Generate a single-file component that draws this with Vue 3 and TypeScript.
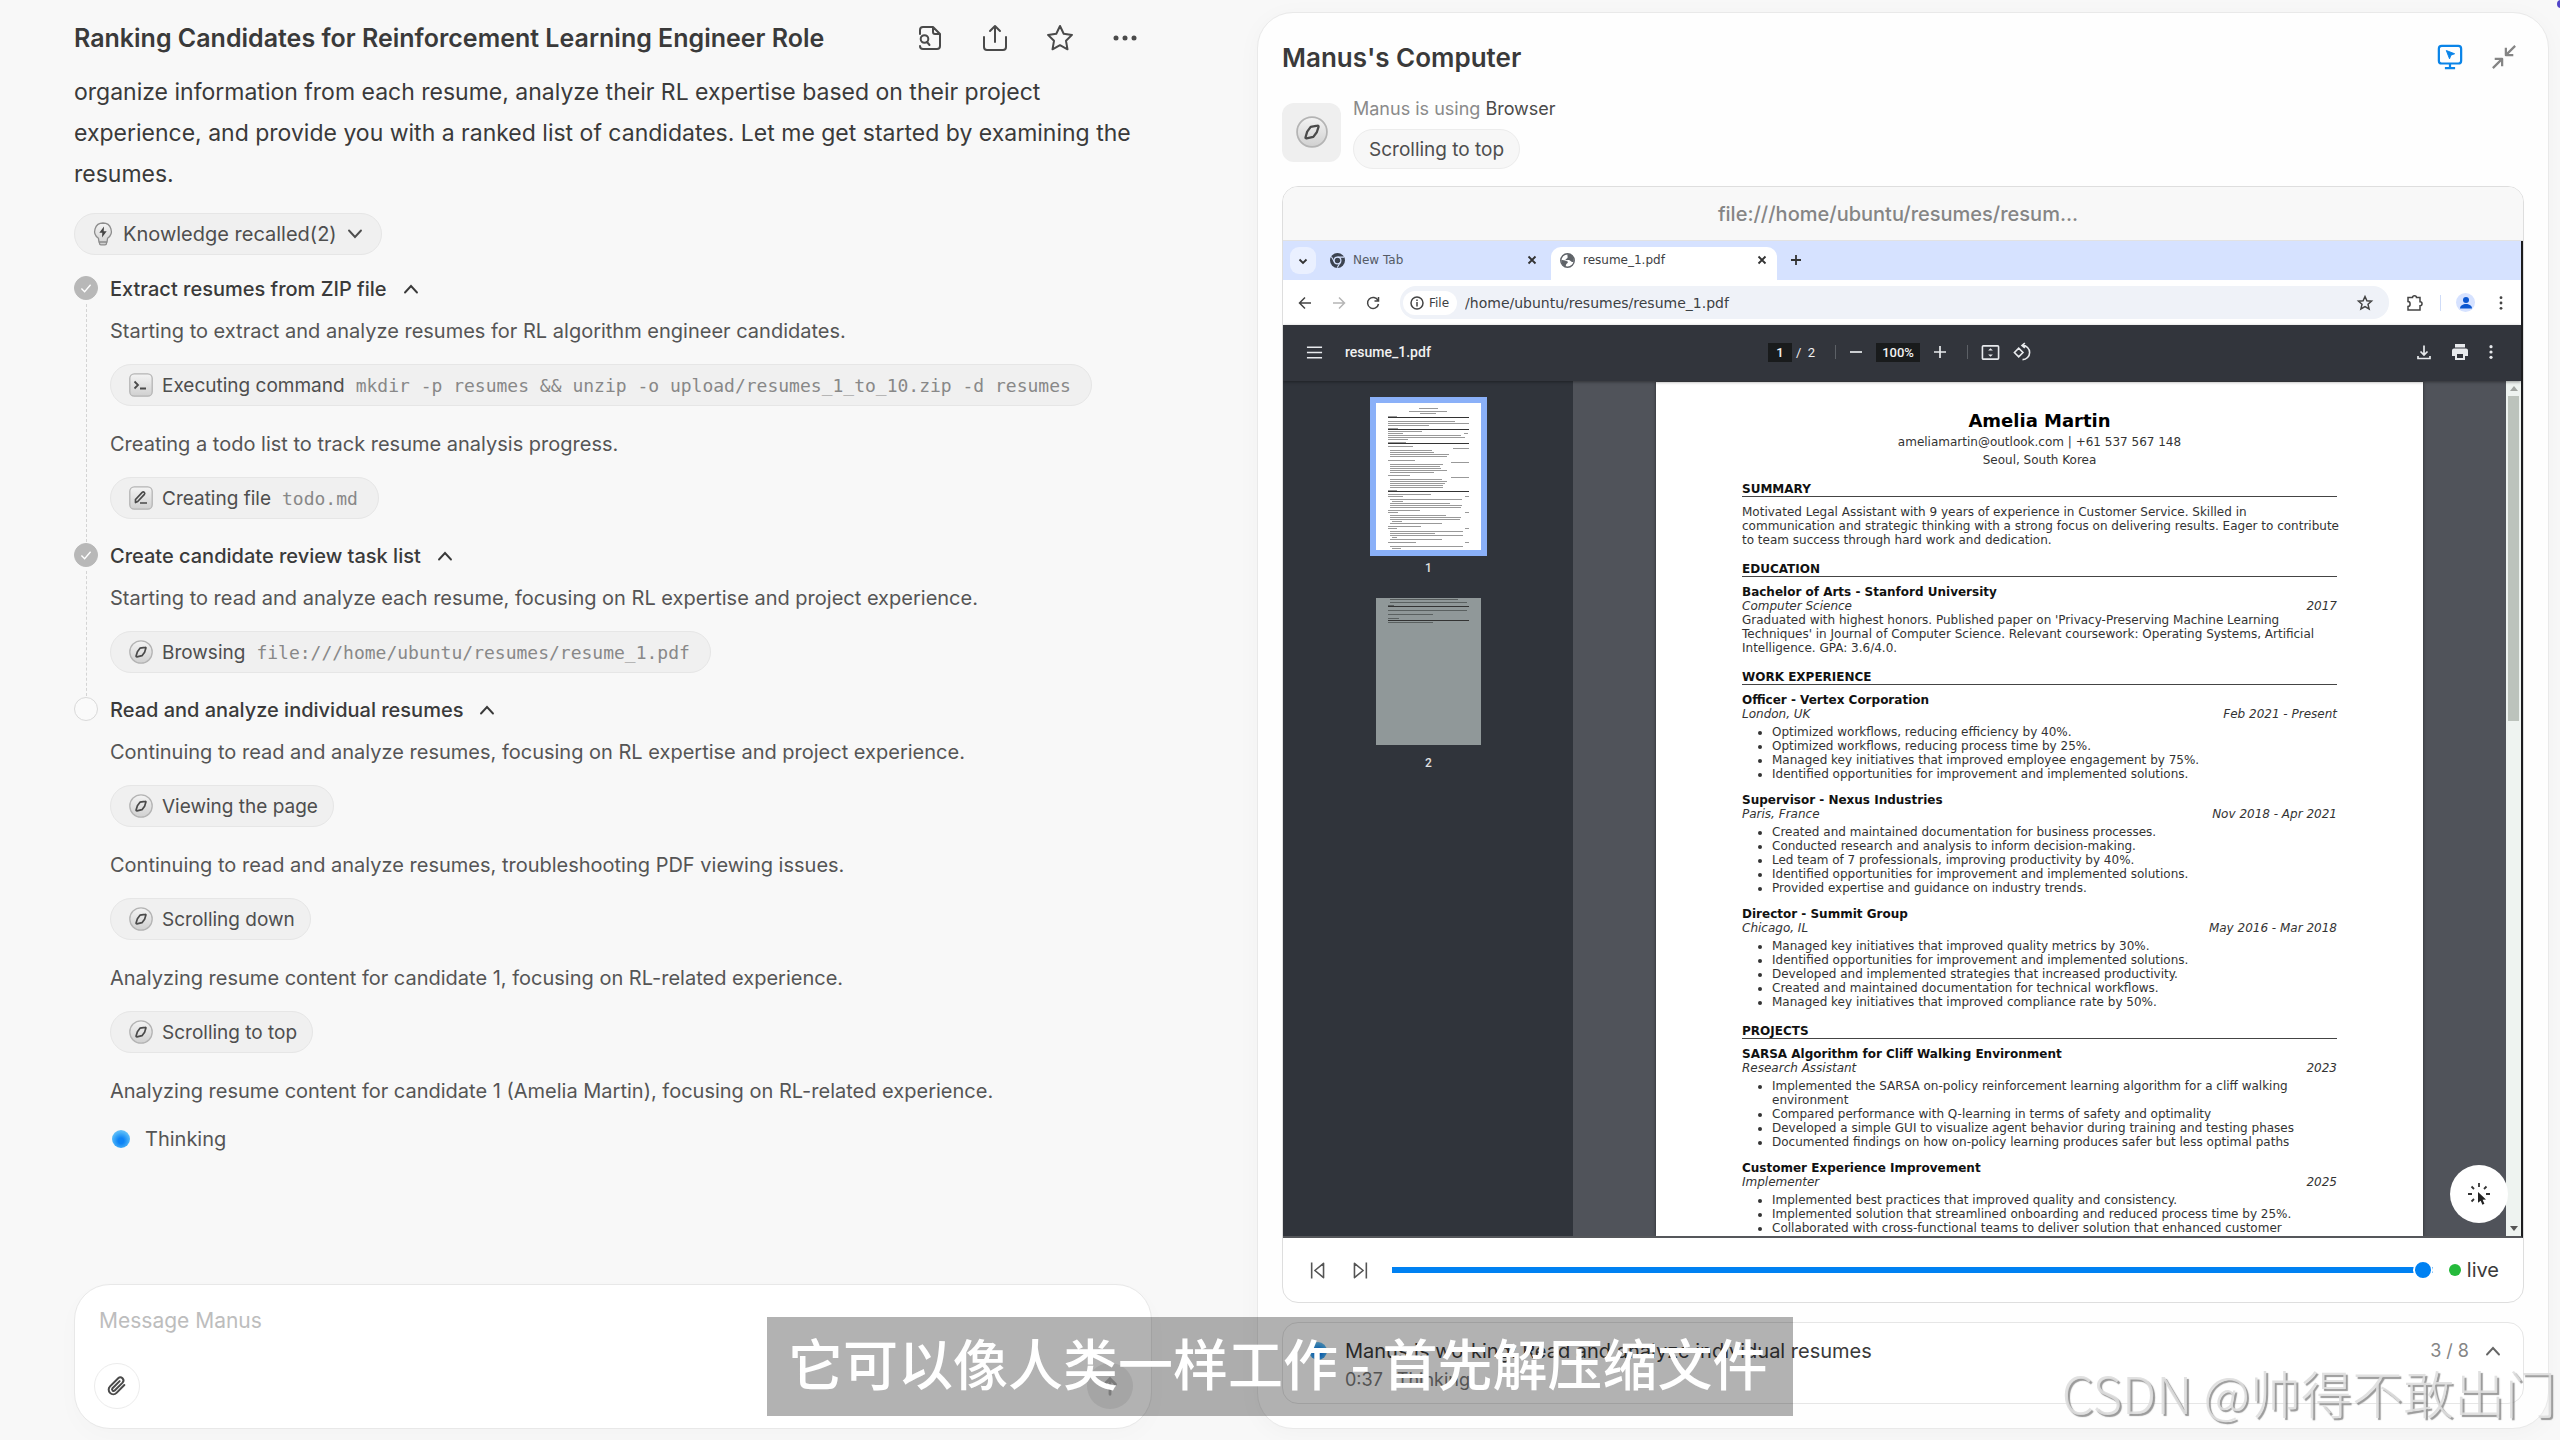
<script setup lang="ts">
import { ref } from 'vue'

interface Entry {
  text: string
  icon?: 'terminal' | 'edit' | 'compass'
  action?: string
  detail?: string
}
interface Step {
  title: string
  done: boolean
  entries: Entry[]
}
interface ResumeItem {
  title: string
  sub: string
  date: string
  lines?: string[]
  bullets?: string[]
}
interface ResumeSection {
  heading: string
  lines?: string[]
  items?: ResumeItem[]
}

const steps: Step[] = [
  {
    title: 'Extract resumes from ZIP file',
    done: true,
    entries: [
      {
        text: 'Starting to extract and analyze resumes for RL algorithm engineer candidates.',
        icon: 'terminal',
        action: 'Executing command',
        detail: 'mkdir -p resumes && unzip -o upload/resumes_1_to_10.zip -d resumes',
      },
      {
        text: 'Creating a todo list to track resume analysis progress.',
        icon: 'edit',
        action: 'Creating file',
        detail: 'todo.md',
      },
    ],
  },
  {
    title: 'Create candidate review task list',
    done: true,
    entries: [
      {
        text: 'Starting to read and analyze each resume, focusing on RL expertise and project experience.',
        icon: 'compass',
        action: 'Browsing',
        detail: 'file:///home/ubuntu/resumes/resume_1.pdf',
      },
    ],
  },
  {
    title: 'Read and analyze individual resumes',
    done: false,
    entries: [
      {
        text: 'Continuing to read and analyze resumes, focusing on RL expertise and project experience.',
        icon: 'compass',
        action: 'Viewing the page',
      },
      {
        text: 'Continuing to read and analyze resumes, troubleshooting PDF viewing issues.',
        icon: 'compass',
        action: 'Scrolling down',
      },
      {
        text: 'Analyzing resume content for candidate 1, focusing on RL-related experience.',
        icon: 'compass',
        action: 'Scrolling to top',
      },
      { text: 'Analyzing resume content for candidate 1 (Amelia Martin), focusing on RL-related experience.' },
    ],
  },
]

const resume: ResumeSection[] = [
  {
    heading: 'SUMMARY',
    lines: [
      'Motivated Legal Assistant with 9 years of experience in Customer Service. Skilled in',
      'communication and strategic thinking with a strong focus on delivering results. Eager to contribute',
      'to team success through hard work and dedication.',
    ],
  },
  {
    heading: 'EDUCATION',
    items: [
      {
        title: 'Bachelor of Arts - Stanford University',
        sub: 'Computer Science',
        date: '2017',
        lines: [
          "Graduated with highest honors. Published paper on 'Privacy-Preserving Machine Learning",
          "Techniques' in Journal of Computer Science. Relevant coursework: Operating Systems, Artificial",
          'Intelligence. GPA: 3.6/4.0.',
        ],
      },
    ],
  },
  {
    heading: 'WORK EXPERIENCE',
    items: [
      {
        title: 'Officer - Vertex Corporation',
        sub: 'London, UK',
        date: 'Feb 2021 - Present',
        bullets: [
          'Optimized workflows, reducing efficiency by 40%.',
          'Optimized workflows, reducing process time by 25%.',
          'Managed key initiatives that improved employee engagement by 75%.',
          'Identified opportunities for improvement and implemented solutions.',
        ],
      },
      {
        title: 'Supervisor - Nexus Industries',
        sub: 'Paris, France',
        date: 'Nov 2018 - Apr 2021',
        bullets: [
          'Created and maintained documentation for business processes.',
          'Conducted research and analysis to inform decision-making.',
          'Led team of 7 professionals, improving productivity by 40%.',
          'Identified opportunities for improvement and implemented solutions.',
          'Provided expertise and guidance on industry trends.',
        ],
      },
      {
        title: 'Director - Summit Group',
        sub: 'Chicago, IL',
        date: 'May 2016 - Mar 2018',
        bullets: [
          'Managed key initiatives that improved quality metrics by 30%.',
          'Identified opportunities for improvement and implemented solutions.',
          'Developed and implemented strategies that increased productivity.',
          'Created and maintained documentation for technical workflows.',
          'Managed key initiatives that improved compliance rate by 50%.',
        ],
      },
    ],
  },
  {
    heading: 'PROJECTS',
    items: [
      {
        title: 'SARSA Algorithm for Cliff Walking Environment',
        sub: 'Research Assistant',
        date: '2023',
        bullets: [
          'Implemented the SARSA on-policy reinforcement learning algorithm for a cliff walking\nenvironment',
          'Compared performance with Q-learning in terms of safety and optimality',
          'Developed a simple GUI to visualize agent behavior during training and testing phases',
          'Documented findings on how on-policy learning produces safer but less optimal paths',
        ],
      },
      {
        title: 'Customer Experience Improvement',
        sub: 'Implementer',
        date: '2025',
        bullets: [
          'Implemented best practices that improved quality and consistency.',
          'Implemented solution that streamlined onboarding and reduced process time by 25%.',
          'Collaborated with cross-functional teams to deliver solution that enhanced customer',
        ],
      },
    ],
  },
]

// Miniature page strokes: [x, y, width]
const rules = [14, 26, 40, 88]
const strokes: [number, number, number][] = [
  [43, 5, 19], [33, 8, 38], [44, 10, 16], [12, 13, 9],
  [12, 18, 67], [12, 20, 81], [12, 22, 41], [12, 25, 10], [12, 28, 34], [12, 30, 15], [88, 30, 4],
  [12, 32, 73], [12, 34, 77], [12, 36, 20], [12, 39, 18], [12, 43, 25], [77, 45, 16],
  [14, 47, 42], [14, 49, 44], [14, 51, 59], [14, 53, 57],
  [12, 57, 27], [75, 59, 18], [14, 61, 53], [14, 63, 50], [14, 65, 51], [14, 67, 57], [14, 69, 44],
  [12, 72, 22], [75, 74, 18], [14, 76, 52], [14, 78, 57], [14, 80, 55], [14, 82, 53], [14, 84, 53], [12, 87, 9],
  [12, 91, 43], [12, 93, 15], [89, 93, 4], [14, 96, 72], [16, 98, 11], [14, 100, 60], [14, 102, 72], [14, 104, 71],
  [12, 107, 32], [12, 109, 10], [89, 109, 4], [14, 112, 56], [14, 114, 71], [14, 116, 70], [16, 118, 10], [14, 120, 52],
  [12, 123, 33], [12, 125, 9], [89, 125, 4], [14, 128, 73], [14, 130, 45], [14, 132, 73], [16, 134, 5], [14, 136, 52],
  [12, 139, 28], [89, 139, 4], [14, 143, 73], [16, 145, 9],
]
const strokes2: [number, number, number][] = [
  [14, 1, 68], [14, 4, 77], [12, 7, 6], [12, 12, 79], [12, 16, 45], [12, 20, 11], [12, 24, 45],
]

const message = ref('')
const progress = ref(100)
const omnibox = ref('/home/ubuntu/resumes/resume_1.pdf')
const pageNo = ref('1')
const zoom = ref('100%')
</script>

<template>
  <div class="app">
    <svg class="defs" aria-hidden="true">
      <linearGradient id="knob" x1="0" y1="0" x2="0" y2="1">
        <stop offset="0" stop-color="#f4f4f4" />
        <stop offset="1" stop-color="#d0d0d0" />
      </linearGradient>
      <symbol id="i-compass" viewBox="0 0 24 24">
        <circle cx="12" cy="12" r="11.2" fill="url(#knob)" stroke="#b4b4b4" stroke-width="1.3" />
        <path d="M11 8.2 16.2 7.3c.5-.1.8.3.7.8L15.600 12.200 13 15.700 7.900 16.800c-.5.1-.9-.2-.8-.7l1.300-4.400z" fill="none" stroke="#4a4a4a" stroke-width="1.700" stroke-linejoin="round" />
      </symbol>
      <symbol id="i-terminal" viewBox="0 0 24 24">
        <rect x=".8" y=".8" width="22.400" height="22.400" rx="4.500" fill="url(#knob)" stroke="#b4b4b4" stroke-width="1.300" />
        <path d="M5.500 8.500 9 12l-3.500 3.500M11 15.500h6" fill="none" stroke="#4a4a4a" stroke-width="1.800" />
      </symbol>
      <symbol id="i-edit" viewBox="0 0 24 24">
        <rect x=".8" y=".8" width="22.400" height="22.400" rx="4.500" fill="url(#knob)" stroke="#b4b4b4" stroke-width="1.300" />
        <path d="M6.500 16.500v-3l6.700-7.200c1.400-1.200 3.300.5 2.200 2l-6.700 7.200zM11 17h7" fill="none" stroke="#4a4a4a" stroke-width="1.700" stroke-linejoin="round" />
      </symbol>
      <symbol id="i-chev" viewBox="0 0 16 16">
        <path d="M2 11.500 8 5l6 6.500" fill="none" stroke="currentColor" stroke-width="1.900" stroke-linecap="round" />
      </symbol>
    </svg>

    <main class="chat">
      <header class="chat-head">
        <h1>Ranking Candidates for Reinforcement Learning Engineer Role</h1>
        <nav class="tools">
          <button aria-label="Files">
            <svg viewBox="0 0 28 28"><path d="M4 10V6a3 3 0 0 1 3-3h10l7 7v12a3 3 0 0 1-3 3H7c-1.700 0-3-1-3-3M17 3v5c0 1.200.8 2 2 2h5" /><circle cx="8.500" cy="15" r="3.800" /><path d="m11 18 2.500 3" /></svg>
          </button>
          <button aria-label="Share">
            <svg viewBox="0 0 28 28"><path d="M14 18V2M9 7l5-5 5 5M3 13v10a3 3 0 0 0 3 3h16a3 3 0 0 0 3-3V13" /></svg>
          </button>
          <button aria-label="Favorite">
            <svg viewBox="0 0 28 28"><path d="m14 2 3.700 7.700 8.300 1.200-6 5.900 1.500 8.500L14 21.200l-7.500 4.100L8 16.800l-6-5.900 8.300-1.200z" /></svg>
          </button>
          <button aria-label="More">
            <svg viewBox="0 0 28 28"><g fill="#4a4a4a" stroke="none"><circle cx="5" cy="14" r="2.500" /><circle cx="14" cy="14" r="2.500" /><circle cx="23" cy="14" r="2.500" /></g></svg>
          </button>
        </nav>
      </header>

      <p class="intro">
        organize information from each resume, analyze their RL expertise based on their project<br />
        experience, and provide you with a ranked list of candidates. Let me get started by examining the<br />
        resumes.
      </p>

      <button class="pill knowledge">
        <svg class="bulb" viewBox="0 0 20 24">
          <path d="M10 1a8.300 8.300 0 0 0-4.600 15.200L6 20h8l.6-3.800A8.300 8.300 0 0 0 10 1zM6.500 20v1.200c0 .9.600 1.600 1.500 1.600h4c.9 0 1.500-.7 1.500-1.600V20" fill="url(#knob)" stroke="#8c8c8c" stroke-width="1.300" />
          <path d="M11 4.500 6.300 10.800h3L9 15.500l4.700-6.300h-3z" fill="#444" />
        </svg>
        <span>Knowledge recalled(2)</span>
        <svg class="chev down"><use href="#i-chev" /></svg>
      </button>

      <section v-for="(step, si) in steps" :key="step.title" class="step">
        <div class="rail">
          <span class="mark" :class="{ done: step.done }">
            <svg v-if="step.done" viewBox="0 0 24 24"><path d="m7 12.500 3.500 3.500L17 8.500" /></svg>
          </span>
          <span v-if="si < steps.length - 1" class="dash"></span>
        </div>
        <div class="step-body">
          <h2>{{ step.title }} <svg class="chev"><use href="#i-chev" /></svg></h2>
          <div v-for="entry in step.entries" :key="entry.text" class="entry">
            <p>{{ entry.text }}</p>
            <button v-if="entry.action" class="pill">
              <svg class="glyph"><use :href="'#i-' + entry.icon" /></svg>
              <span>{{ entry.action }}</span>
              <code v-if="entry.detail">{{ entry.detail }}</code>
            </button>
          </div>
          <div v-if="!step.done" class="thinking"><i class="orb"></i>Thinking</div>
        </div>
      </section>

      <form class="composer" @submit.prevent>
        <textarea v-model="message" rows="1" placeholder="Message Manus" aria-label="Message Manus"></textarea>
        <div class="composer-row">
          <button type="button" class="attach" aria-label="Attach file">
            <svg viewBox="0 0 24 24"><path d="m20 11-8.500 8.500a5 5 0 0 1-7.100-7.100l8.900-8.900a3.400 3.400 0 0 1 4.800 4.800l-8.600 8.600a1.700 1.700 0 0 1-2.400-2.400l7.800-7.800" /></svg>
          </button>
          <button type="submit" class="send" aria-label="Send">
            <svg viewBox="0 0 24 24"><path d="M12 21V4M6 10l6-6 6 6" /></svg>
          </button>
        </div>
      </form>
    </main>

    <aside class="computer">
      <header class="comp-head">
        <h2>Manus's Computer</h2>
        <button class="blue" aria-label="Take control">
          <svg viewBox="0 0 28 28"><rect x="2" y="2" width="24" height="19" rx="3" /><path d="M14 21v4M8.500 26h11" /><path d="m10 7 9 3.500-4 1.500-1.500 4z" fill="currentColor" stroke-width="1" /></svg>
        </button>
        <button class="grey" aria-label="Minimize">
          <svg viewBox="0 0 28 28"><path d="M26 2 16 12M16 4v8h8M2 26l10-10M4 16h8v8" /></svg>
        </button>
      </header>

      <div class="using">
        <span class="tile"><svg><use href="#i-compass" /></svg></span>
        <div>
          <p>Manus is using <b>Browser</b></p>
          <span class="pill light">Scrolling to top</span>
        </div>
      </div>

      <section class="viewer">
        <div class="address">file:///home/ubuntu/resumes/resum...</div>

        <div class="screen">
          <div class="tabs">
            <button class="tab-menu" aria-label="Search tabs"><svg viewBox="0 0 12 12"><path d="m2.500 4.500 3.500 3.500 3.500-3.500" /></svg></button>
            <button class="tab">
              <svg class="fav" viewBox="0 0 16 16"><circle cx="8" cy="8" r="8" fill="#3c4350" /><circle cx="8" cy="8" r="3.600" fill="#3c4350" stroke="#d6e2ff" stroke-width="1.300" /><path d="M8 4.400h7M4.900 9.800 1.500 4M11.100 9.800 7.700 15.600" stroke="#d6e2ff" stroke-width="1.100" /></svg>
              <span>New Tab</span><svg class="close" viewBox="0 0 10 10"><path d="m1.500 1.500 7 7m0-7-7 7" /></svg>
            </button>
            <button class="tab active">
              <svg class="fav" viewBox="0 0 16 16"><circle cx="8" cy="8" r="7.200" fill="#fff" stroke="#5f6368" stroke-width="1.500" /><path d="M1.500 7.500C4 7 6 8.500 8 9c1 .4 0 2-1 2.500-.6.500-.5 1.500-1 2.900C3 13.500 1 11 1.500 7.500zM8 1c-.5 2 .5 2.500 0 4-.5 1.400-2.500 1-2 2.500 2 .5 3-.5 4.500.5s2 2 4 1.500C15.500 4.500 12 1 8 1z" fill="#5f6368" /></svg>
              <span>resume_1.pdf</span><svg class="close" viewBox="0 0 10 10"><path d="m1.500 1.500 7 7m0-7-7 7" /></svg>
            </button>
            <button class="new-tab" aria-label="New tab"><svg viewBox="0 0 12 12"><path d="M6 1v10M1 6h10" /></svg></button>
          </div>

          <div class="navbar">
            <button aria-label="Back"><svg viewBox="0 0 14 14"><path d="M13 7H2M7 1.500 1.500 7 7 12.500" /></svg></button>
            <button aria-label="Forward" class="off"><svg viewBox="0 0 14 14"><path d="M1 7h11M7 1.500 12.500 7 7 12.500" /></svg></button>
            <button aria-label="Reload"><svg viewBox="0 0 14 14"><path d="M12 4.500A5.500 5.500 0 1 0 12.500 8M12.500 1v4h-4" /></svg></button>
            <div class="omni">
              <span class="chip"><svg viewBox="0 0 14 14"><circle cx="7" cy="7" r="6" /><path d="M7 6v4.500M7 3.500V5" /></svg>File</span>
              <input v-model="omnibox" aria-label="Address" />
              <button aria-label="Bookmark"><svg viewBox="0 0 16 16"><path d="m8 1.500 1.900 4.300 4.600.4-3.500 3.100 1.100 4.600L8 11.500l-4.100 2.400L5 9.300 1.500 6.200l4.600-.4z" /></svg></button>
            </div>
            <button aria-label="Extensions" class="ext"><svg viewBox="0 0 18 18"><path d="M2 3.500h4.500c0-2.500 4-2.500 4 0H14v4.300c2.700 0 2.700 3.900 0 3.900V16H2v-3.500c2.800 0 2.800-5 0-5z" /></svg></button>
            <i class="sep"></i>
            <button aria-label="Profile" class="profile"><svg viewBox="0 0 18 18"><circle cx="9" cy="6" r="3" /><path d="M3 14.500c0-3 3-4.500 6-4.500s6 1.500 6 4.500z" /></svg></button>
            <button aria-label="Menu" class="dots"><svg viewBox="0 0 6 18"><circle cx="3" cy="3" r="1.600" /><circle cx="3" cy="9" r="1.600" /><circle cx="3" cy="15" r="1.600" /></svg></button>
          </div>

          <div class="pdfbar">
            <div class="pdf-left">
              <button aria-label="Sidebar"><svg viewBox="0 0 18 18"><path d="M1 3.500h16M1 9h16M1 14.500h16" /></svg></button>
              <span>resume_1.pdf</span>
            </div>
            <div class="pdf-mid">
              <input v-model="pageNo" class="page-no" aria-label="Page" />
              <span class="of">/&nbsp; 2</span>
              <i></i>
              <button aria-label="Zoom out"><svg viewBox="0 0 14 14"><path d="M1 7h12" /></svg></button>
              <input v-model="zoom" class="zoom" aria-label="Zoom level" />
              <button aria-label="Zoom in"><svg viewBox="0 0 14 14"><path d="M1 7h12M7 1v12" /></svg></button>
              <i></i>
              <button aria-label="Fit to page" class="wide"><svg viewBox="0 0 20 20"><rect x="1.500" y="3" width="17" height="14" rx="1" /><path d="M7.500 8 10 5.500 12.500 8zM7.500 12l2.500 2.500 2.500-2.500z" fill="#e8eaed" stroke="none" /></svg></button>
              <button aria-label="Rotate" class="wide"><svg viewBox="0 0 20 20"><path d="m1.500 10 4.500-4.500 4.500 4.500-4.500 4.500zM10 2.500a7.500 7.500 0 1 1 0 15M12.500 .2 9.500 2.600 12.500 5.200" /></svg></button>
            </div>
            <div class="pdf-right">
              <button aria-label="Download"><svg viewBox="0 0 16 16"><path d="M8 1.500v9M4.500 7.500 8 11l3.500-3.500M2 12v2.500h12V12" /></svg></button>
              <button aria-label="Print" class="print"><svg viewBox="0 0 18 18"><path d="M4 1h10v3.500H4zM3 5.500h12a2 2 0 0 1 2 2V13h-3v4H4v-4H1V7.500a2 2 0 0 1 2-2zm3 5.500v4h6v-4z" fill-rule="evenodd" /></svg></button>
              <button aria-label="More" class="dots"><svg viewBox="0 0 6 18"><circle cx="3" cy="3" r="1.800" /><circle cx="3" cy="9" r="1.800" /><circle cx="3" cy="15" r="1.800" /></svg></button>
            </div>
          </div>

          <div class="pdf-body">
            <div class="thumbs">
              <button class="thumb current" aria-label="Page 1">
                <svg viewBox="0 0 105 147">
                  <rect v-for="r in rules" :key="r" x="12" :y="r" width="81" height="1" fill="#333" />
                  <rect v-for="(s, i) in strokes" :key="i" :x="s[0]" :y="s[1]" :width="s[2]" height="1" fill="#999" />
                </svg>
              </button>
              <span>1</span>
              <button class="thumb second" aria-label="Page 2">
                <svg viewBox="0 0 105 147">
                  <rect x="12" y="8" width="81" height="1" fill="#333" />
                  <rect x="12" y="22" width="81" height="1" fill="#333" />
                  <rect v-for="(s, i) in strokes2" :key="i" :x="s[0]" :y="s[1]" :width="s[2]" height="1" fill="#5a6060" />
                </svg>
              </button>
              <span>2</span>
            </div>

            <div class="page-area">
              <article class="page">
                <h3>Amelia Martin</h3>
                <p class="contact">ameliamartin@outlook.com | +61 537 567 148</p>
                <p class="contact">Seoul, South Korea</p>
                <section v-for="sec in resume" :key="sec.heading">
                  <h4>{{ sec.heading }}</h4>
                  <p v-for="l in sec.lines" :key="l">{{ l }}</p>
                  <div v-for="it in sec.items" :key="it.title" class="item">
                    <h5>{{ it.title }}</h5>
                    <p class="sub"><em>{{ it.sub }}</em><em>{{ it.date }}</em></p>
                    <p v-for="l in it.lines" :key="l">{{ l }}</p>
                    <ul v-if="it.bullets">
                      <li v-for="b in it.bullets" :key="b">{{ b }}</li>
                    </ul>
                  </div>
                </section>
              </article>
            </div>

            <div class="scrollbar"><i class="up"></i><i class="grip"></i><i class="down"></i></div>
          </div>

          <button class="takeover" aria-label="Take over">
            <svg viewBox="0 0 24 24"><path d="M12 1v4M4.500 4.500 7 7M19.500 4.500 17 7M1 12h4M19 12h4M4.500 19.500 7 17" fill="none" stroke="#333" stroke-width="1.800" /><path d="m11 10 8 7.500-3.400.3 1.800 4-2 .9-1.700-4-2.700 2z" fill="#222" /></svg>
          </button>
        </div>

        <div class="controls">
          <button aria-label="Previous"><svg viewBox="0 0 20 24"><path d="M2 2v20M17 3v18L6 12z" /></svg></button>
          <button aria-label="Next"><svg viewBox="0 0 20 24"><path d="M18 2v20M3 3v18l11-9z" /></svg></button>
          <input v-model="progress" type="range" min="0" max="100" aria-label="Timeline" />
          <span class="live"><i></i>live</span>
        </div>
      </section>

      <section class="status">
        <i class="orb"></i>
        <div class="status-text">
          <p>Manus is working: Read and analyze individual resumes</p>
          <p class="small"><span>0:37</span><span>Thinking</span></p>
        </div>
        <span class="count">3 / 8</span>
        <svg class="chev"><use href="#i-chev" /></svg>
      </section>
    </aside>

    <i class="dot-corner"></i>
    <div class="subtitle">它可以像人类一样工作 - 首先解压缩文件</div>
    <div class="watermark">CSDN @帅得不敢出门</div>
  </div>
</template>

<style>
body {
  background: #f8f8f8;
  overflow: hidden;
}
</style>

<style scoped>
* {
  box-sizing: border-box;
}
.app {
  position: relative;
  display: grid;
  grid-template-columns: minmax(0, 1257fr) minmax(0, 1292fr);
  min-height: 100vh;
  padding: 12px 11px 11px 0;
  overflow: hidden;
  background: #f8f8f8;
  color: #3a3a3a;
  font-family: Inter, 'Liberation Sans', sans-serif;
  font-size: 20px;
}
.defs {
  position: absolute;
  width: 0;
  height: 0;
}
h1, h2, h3, h4, h5, p, ul {
  margin: 0;
  padding: 0;
}
button, input, textarea {
  margin: 0;
  padding: 0;
  border: 0;
  outline: 0;
  background: none;
  color: inherit;
  font: inherit;
}
button {
  display: flex;
  align-items: center;
  justify-content: center;
  flex: none;
}
svg {
  flex: none;
  overflow: visible;
}

/* chat column */
.chat {
  display: flex;
  flex-direction: column;
  align-items: flex-start;
  padding: 0 105px 0 74px;
}
.chat-head {
  display: flex;
  align-items: center;
  justify-content: space-between;
  align-self: stretch;
  height: 52px;
  padding-right: 13px;
}
.chat-head h1 {
  font-size: 25px;
  font-weight: 600;
  white-space: nowrap;
}
.tools {
  display: flex;
  gap: 37px;
}
.tools svg {
  width: 28px;
  height: 28px;
  fill: none;
  stroke: #4a4a4a;
  stroke-width: 2;
  stroke-linecap: round;
  stroke-linejoin: round;
}
.intro {
  margin: 8px 0 18px;
  font-size: 23px;
  line-height: 41px;
  white-space: nowrap;
}
.pill {
  display: flex;
  width: fit-content;
  height: 42px;
  align-items: center;
  gap: 9px;
  padding: 0 15px 0 18px;
  border: 1px solid #e6e6e6;
  border-radius: 21px;
  background: #f0f0f0;
  color: #4e4e4e;
  font-size: 19px;
  white-space: nowrap;
}
.pill code {
  margin-left: 2px;
  padding-right: 5px;
  color: #888;
  font-family: 'DejaVu Sans Mono', monospace;
  font-size: 18px;
}
.glyph {
  width: 24px;
  height: 24px;
}
.knowledge {
  gap: 10px;
  margin-bottom: 16px;
  padding-right: 18px;
  font-size: 20px;
}
.bulb {
  width: 20px;
  height: 24px;
}
.chev {
  width: 16px;
  height: 16px;
}
.chev.down {
  transform: rotate(180deg);
}
.step {
  display: flex;
  gap: 12px;
}
.rail {
  display: flex;
  width: 24px;
  flex-direction: column;
  align-items: center;
  padding-top: 5px;
}
.mark {
  width: 24px;
  height: 24px;
  flex: none;
  border: 1px solid #d9d9d9;
  border-radius: 50%;
  background: #fafafa;
}
.mark.done {
  border-color: #b8b8b8;
  background: #b8b8b8;
}
.mark svg {
  display: block;
  fill: none;
  stroke: #fff;
  stroke-width: 1.5;
}
.dash {
  flex: 1;
  margin: 4px 0 -4px;
  border-left: 1px dashed #d4d4d4;
}
.step-body h2 {
  display: flex;
  align-items: center;
  gap: 16px;
  margin-bottom: 6px;
  font-size: 20px;
  font-weight: 500;
  line-height: 36px;
}
.entry p {
  color: #555;
  font-size: 20px;
  line-height: 36px;
  white-space: nowrap;
}
.entry .pill {
  margin: 15px 0 20px;
}
.entry:last-child .pill {
  margin-bottom: 19px;
}
.thinking {
  display: flex;
  align-items: center;
  gap: 15px;
  margin-top: 12px;
  color: #555;
  line-height: 36px;
}
.orb {
  width: 18px;
  height: 18px;
  margin-left: 2px;
  border-radius: 50%;
  background: radial-gradient(circle at 50% 60%, #0d83f5 20%, #4db4f8 60%, #8fd3f8 100%);
}
.composer {
  display: flex;
  flex-direction: column;
  align-self: stretch;
  justify-content: space-between;
  height: 145px;
  margin-top: auto;
  padding: 20px 18px 19px 19px;
  border: 1px solid #e8e8e8;
  border-radius: 36px;
  background: #fff;
  box-shadow: 0 8px 24px rgba(0, 0, 0, 0.02);
}
.composer textarea {
  height: 32px;
  padding-left: 5px;
  resize: none;
  overflow: hidden;
  font-size: 21px;
  line-height: 32px;
}
.composer textarea::placeholder {
  color: #bdbdbd;
}
.composer-row {
  display: flex;
  justify-content: space-between;
}
.composer-row button {
  width: 46px;
  height: 46px;
  border-radius: 50%;
}
.composer-row svg {
  width: 22px;
  height: 22px;
  fill: none;
  stroke: #4a4a4a;
  stroke-width: 2.2;
  stroke-linecap: round;
}
.attach {
  border: 1px solid #ececec;
}
.send {
  background: #ececec;
}
.send svg {
  stroke: #b0b0b0;
  stroke-width: 3;
}

/* computer panel */
.computer {
  display: flex;
  flex-direction: column;
  padding: 22px 24px 24px;
  border: 1px solid #e9e9e9;
  border-radius: 36px;
  background: #fefefe;
  box-shadow: 0 4px 24px rgba(0, 0, 0, 0.03);
}
.comp-head {
  display: flex;
  align-items: center;
  height: 44px;
  padding-right: 7px;
}
.comp-head h2 {
  flex: 1;
  font-size: 26px;
  font-weight: 600;
}
.comp-head svg {
  width: 26px;
  height: 26px;
  fill: none;
  stroke: currentColor;
  stroke-width: 2.4;
  stroke-linejoin: round;
}
.blue {
  margin-right: 28px;
  color: #0a84e8;
}
.grey {
  color: #858585;
}
.using {
  display: flex;
  align-items: center;
  gap: 12px;
  margin: 16px 0 17px;
}
.tile {
  display: flex;
  width: 59px;
  height: 59px;
  align-items: center;
  justify-content: center;
  border-radius: 12px;
  background: #efefef;
}
.tile svg {
  width: 32px;
  height: 32px;
}
.using p {
  margin-bottom: 6px;
  color: #8a8a8a;
  font-size: 18px;
  line-height: 28px;
}
.using b {
  color: #4a4a4a;
  font-weight: 400;
}
.pill.light {
  height: 40px;
  padding: 0 15px;
  border-color: #ececec;
  background: #f7f7f7;
}
.viewer {
  display: flex;
  flex: 1;
  flex-direction: column;
  overflow: hidden;
  border: 1px solid #dedede;
  border-radius: 16px;
  background: #fff;
}
.address {
  height: 54px;
  padding-right: 10px;
  border-bottom: 1px solid #e2e2e2;
  background: #f8f8f8;
  color: #858585;
  font-size: 20px;
  font-weight: 500;
  line-height: 54px;
  text-align: center;
}
.screen {
  position: relative;
  display: flex;
  flex: 1 1 0;
  min-height: 0;
  flex-direction: column;
  overflow: hidden;
  border-right: 2px solid #1c1c1e;
  border-bottom: 2px solid #55575b;
  background: #32353c;
  font-family: 'DejaVu Sans', sans-serif;
}
.tabs {
  display: flex;
  height: 39px;
  flex: none;
  align-items: flex-end;
  padding-left: 7px;
  background: #d6e2ff;
  color: #3c4043;
  font-size: 12px;
}
.tab-menu {
  width: 26px;
  height: 27px;
  margin-bottom: 6px;
  border-radius: 9px;
  background: #eaf0ff;
}
.tab-menu svg, .new-tab svg, .close {
  width: 12px;
  height: 12px;
  fill: none;
  stroke: #333;
  stroke-width: 1.8;
}
.close {
  width: 10px;
  height: 10px;
}
.tab {
  width: 235px;
  height: 33px;
  padding: 0 14px 7px 14px;
  color: #555b66;
}
.tab.active {
  width: 226px;
  padding-left: 9px;
  padding-right: 10px;
  border-radius: 10px 10px 0 0;
  background: #fff;
  color: #3c4043;
}
.tab span {
  flex: 1;
  margin-left: 8px;
  text-align: left;
}
.fav {
  width: 15px;
  height: 15px;
}
.new-tab {
  width: 38px;
  height: 33px;
  padding-bottom: 7px;
}
.navbar {
  display: flex;
  height: 45px;
  flex: none;
  align-items: center;
  padding: 0 13px 0 15px;
  background: #fff;
  color: #3c4043;
  font-size: 14px;
}
.navbar svg {
  width: 14px;
  height: 14px;
  fill: none;
  stroke: #444;
  stroke-width: 1.5;
}
.navbar > button {
  margin-right: 20px;
}
.navbar > .off svg {
  stroke: #b5b5b5;
}
.omni {
  display: flex;
  height: 33px;
  flex: 1;
  align-items: center;
  padding: 0 16px 0 3px;
  border-radius: 16px;
  background: #eff2f8;
}
.chip {
  display: flex;
  height: 24px;
  align-items: center;
  gap: 5px;
  padding: 0 8px 0 7px;
  border-radius: 12px;
  background: #fff;
  font-size: 12px;
}
.omni input {
  flex: 1;
  margin-left: 8px;
}
.omni button svg {
  width: 16px;
  height: 16px;
}
.navbar > .ext {
  margin: 0 16px 0 17px;
}
.navbar > .ext svg {
  width: 18px;
  height: 18px;
}
.sep {
  width: 1px;
  height: 16px;
  background: #cfdcf8;
}
.navbar > .profile {
  width: 19px;
  height: 19px;
  margin: 0 23px 0 15px;
  border-radius: 50%;
  background: #d6e2ff;
}
.profile svg {
  width: 18px;
  height: 18px;
  fill: #0b57d0;
  stroke: none;
}
.navbar > .dots {
  margin: 0 4px 0 0;
}
.dots svg {
  width: 6px;
  height: 16px;
  fill: #444;
  stroke: none;
}
.pdfbar {
  display: grid;
  grid-template-columns: minmax(0, 1fr) auto minmax(0, 1fr);
  height: 56px;
  flex: none;
  align-items: center;
  padding: 0 27px 2px 23px;
  background: #32353c;
  box-shadow: 0 1px 3px rgba(0, 0, 0, 0.4);
  color: #f1f1f1;
  font-family: Roboto, sans-serif;
  font-size: 13px;
  z-index: 1;
}
.pdfbar svg {
  width: 14px;
  height: 14px;
  fill: none;
  stroke: #e8eaed;
  stroke-width: 1.7;
}
.pdf-left, .pdf-mid, .pdf-right {
  display: flex;
  align-items: center;
}
.pdf-left {
  gap: 22px;
  font-size: 14px;
  font-weight: 500;
}
.pdf-left svg {
  width: 17px;
  height: 17px;
}
.pdf-mid {
  gap: 13px;
}
.pdf-mid i {
  width: 1px;
  height: 14px;
  margin: 0 0 0 7px;
  background: #5c6066;
}
.pdf-mid input {
  height: 19px;
  background: #191b1c;
  font-weight: 500;
  text-align: center;
}
.page-no {
  width: 24px;
}
.of {
  margin-left: -9px;
}
.zoom {
  width: 44px;
}
.pdf-mid .wide svg {
  width: 19px;
  height: 19px;
}
.pdf-right {
  gap: 19px;
  justify-content: flex-end;
}
.pdf-right svg {
  width: 16px;
  height: 16px;
}
.pdf-right .print svg {
  width: 18px;
  height: 18px;
  fill: #e8eaed;
  stroke: none;
}
.pdf-right .dots svg {
  width: 6px;
  fill: #e8eaed;
  stroke: none;
}
.pdf-body {
  display: flex;
  min-height: 0;
  flex: 1;
}
.thumbs {
  display: flex;
  width: 290px;
  flex: none;
  flex-direction: column;
  align-items: center;
  padding-top: 16px;
  padding-left: 1px;
  background: #30343b;
  color: #e0e0e0;
  font-family: Roboto, sans-serif;
  font-size: 12px;
  font-weight: 500;
  line-height: 24px;
}
.thumb {
  background: #fff;
}
.thumb svg {
  width: 105px;
  height: 147px;
}
.thumb.current {
  border: 6px solid #8ab0f8;
}
.thumb.second {
  margin: 18px 0 6px;
  background: #909899;
}
.page-area {
  min-width: 0;
  flex: 1;
  padding: 1px 83px 0;
  background: #50535a;
}
.page {
  height: 100%;
  overflow: hidden;
  padding: 29px 86px 0;
  background: #fff;
  color: #333;
  font-size: 12px;
  line-height: 14px;
  box-shadow: 0 0 3px rgba(0, 0, 0, 0.5);
  white-space: pre;
}
.page h3 {
  margin-bottom: 2px;
  color: #000;
  font-size: 18px;
  line-height: 20px;
  text-align: center;
}
.page .contact {
  line-height: 18px;
  text-align: center;
}
.page h4 {
  margin: 13px 0 8px;
  border-bottom: 1px solid #444;
  color: #111;
  font-size: 12px;
  line-height: 14px;
}
.page section + section h4 {
  margin-top: 15px;
}
.page h5 {
  color: #111;
  font-size: 12px;
}
.item + .item {
  margin-top: 12px;
}
.sub {
  display: flex;
  justify-content: space-between;
}
.page ul {
  margin-top: 4px;
  padding-left: 30px;
}
.scrollbar {
  display: flex;
  width: 15px;
  flex: none;
  flex-direction: column;
  align-items: center;
  background: #eef3f0;
}
.up, .scrollbar .down {
  margin: 5px 0;
  border: 4px solid transparent;
  border-top: 0;
  border-bottom: 5px solid #a0a4a0;
}
.scrollbar .down {
  margin-top: auto;
  border-top: 5px solid #555;
  border-bottom: 0;
}
.grip {
  width: 11px;
  height: 38%;
  background: #bcc3bc;
}
.takeover {
  position: absolute;
  right: 13px;
  bottom: 13px;
  width: 58px;
  height: 58px;
  border-radius: 50%;
  background: #fff;
}
.takeover svg {
  width: 24px;
  height: 24px;
}
.controls {
  display: flex;
  height: 64px;
  flex: none;
  align-items: center;
  padding: 0 24px 0 25px;
}
.controls button {
  margin-right: 22px;
}
.controls svg {
  width: 20px;
  height: 19px;
  fill: none;
  stroke: #555;
  stroke-width: 2;
  stroke-linejoin: round;
}
.controls input {
  height: 20px;
  flex: 1;
  margin-right: 16px;
  appearance: none;
  background: linear-gradient(#0081f2, #0081f2) center / 100% 6px no-repeat;
}
.controls input::-webkit-slider-thumb {
  width: 20px;
  height: 20px;
  appearance: none;
  border: 2px solid #fff;
  border-radius: 50%;
  background: #0081f2;
}
.live {
  display: flex;
  align-items: center;
  gap: 6px;
}
.live i {
  width: 12px;
  height: 12px;
  border-radius: 50%;
  background: #25ba3b;
}
.status {
  display: flex;
  align-items: flex-start;
  height: 82px;
  margin-top: 19px;
  padding: 10px 22px 0 24px;
  border: 1px solid #e6e6e6;
  border-radius: 16px;
  background: #fff;
}
.status .orb {
  margin: 9px 18px 0 2px;
}
.status-text {
  flex: 1;
  line-height: 36px;
}
.status-text .small {
  display: flex;
  gap: 14px;
  color: #777;
  font-size: 18px;
  line-height: 22px;
}
.count {
  margin-right: 16px;
  color: #858585;
  font-size: 18px;
  line-height: 36px;
}
.status .chev {
  margin-top: 10px;
  color: #666;
}

/* overlays */
.dot-corner {
  position: absolute;
  top: 0;
  right: -5px;
  width: 8px;
  height: 8px;
  border-radius: 50%;
  background: #5146c8;
}
.subtitle {
  position: absolute;
  bottom: 24px;
  left: 50%;
  margin-left: -513px;
  padding: 0 26px 10px 21px;
  background: rgba(0, 0, 0, 0.3);
  color: #fff;
  font-family: 'Noto Sans CJK SC', sans-serif;
  font-size: 55px;
  font-weight: 500;
  line-height: 89px;
  white-space: nowrap;
}
.watermark {
  position: absolute;
  right: 4px;
  bottom: 13px;
  color: rgba(222, 222, 222, 0.9);
  font-family: 'Noto Sans CJK SC', sans-serif;
  font-size: 51px;
  font-weight: 300;
  line-height: 70px;
  text-shadow: 2px 2px 1px rgba(110, 110, 110, 0.7);
  white-space: nowrap;
}
</style>
